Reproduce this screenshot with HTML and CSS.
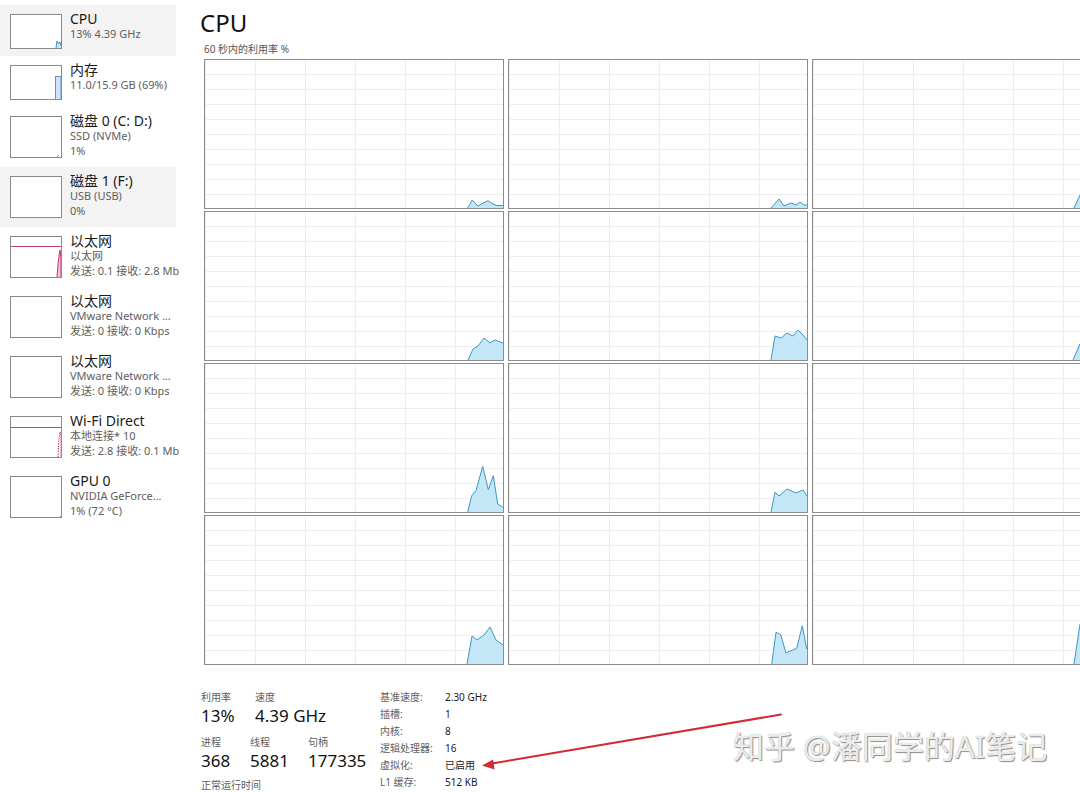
FILE: index.html
```html
<!DOCTYPE html>
<html lang="zh-CN">
<head>
<meta charset="utf-8">
<title>任务管理器 - CPU</title>
<link rel="stylesheet" href="styles.css">
</head>
<body>
<div class="app">
  <aside class="side">
    <div class="item two sel">
      <div class="thumb t2"><svg viewBox="0 0 50 33" preserveAspectRatio="none"><polygon class="cpu-f" points="45,33 46,26 47.5,29 49,27 50,31 50,33"/><polyline class="cpu-s" points="45,33 46,26 47.5,29 49,27 50,31"/></svg></div>
      <div class="txt"><div class="ttl">CPU</div><div class="sub">13% 4.39 GHz</div></div>
    </div>
    <div class="item two">
      <div class="thumb t2"><svg viewBox="0 0 50 33" preserveAspectRatio="none"><rect class="mem" x="44.5" y="10.5" width="5.5" height="23"/></svg></div>
      <div class="txt"><div class="ttl">内存</div><div class="sub">11.0/15.9 GB (69%)</div></div>
    </div>
    <div class="item three">
      <div class="thumb t3"><svg viewBox="0 0 50 40" preserveAspectRatio="none"><polyline class="dsk" points="46,40 48,38"/></svg></div>
      <div class="txt"><div class="ttl">磁盘 0 (C: D:)</div><div class="sub">SSD (NVMe)</div><div class="sub">1%</div></div>
    </div>
    <div class="item three sel">
      <div class="thumb t3"></div>
      <div class="txt"><div class="ttl">磁盘 1 (F:)</div><div class="sub">USB (USB)</div><div class="sub">0%</div></div>
    </div>
    <div class="item three">
      <div class="thumb t3"><svg viewBox="0 0 50 40" preserveAspectRatio="none"><line class="net-l" x1="0" y1="9.5" x2="50" y2="9.5"/><polygon class="net-f" points="46,40 47,27 48,19 49,13 50,21 50,40"/><polyline class="net-s" points="46,40 47,27 48,19 49,13 50,21 50,40"/></svg></div>
      <div class="txt"><div class="ttl">以太网</div><div class="sub">以太网</div><div class="sub">发送: 0.1 接收: 2.8 Mb</div></div>
    </div>
    <div class="item three">
      <div class="thumb t3"></div>
      <div class="txt"><div class="ttl">以太网</div><div class="sub">VMware Network ...</div><div class="sub">发送: 0 接收: 0 Kbps</div></div>
    </div>
    <div class="item three">
      <div class="thumb t3"></div>
      <div class="txt"><div class="ttl">以太网</div><div class="sub">VMware Network ...</div><div class="sub">发送: 0 接收: 0 Kbps</div></div>
    </div>
    <div class="item three">
      <div class="thumb t3"><svg viewBox="0 0 50 40" preserveAspectRatio="none"><line class="net-l" x1="0" y1="10.5" x2="50" y2="10.5"/><polyline class="net-d" points="47,40 47.5,30 48,22 49,15 50,18 50,40"/></svg></div>
      <div class="txt"><div class="ttl">Wi-Fi Direct</div><div class="sub">本地连接* 10</div><div class="sub">发送: 2.8 接收: 0.1 Mb</div></div>
    </div>
    <div class="item three">
      <div class="thumb t3"><svg viewBox="0 0 50 40" preserveAspectRatio="none"><polyline class="dsk" points="49,40 50,39"/></svg></div>
      <div class="txt"><div class="ttl">GPU 0</div><div class="sub">NVIDIA GeForce...</div><div class="sub">1% (72 °C)</div></div>
    </div>
  </aside>

  <main class="main">
    <h1 class="title">CPU</h1>
    <div class="caption">60 秒内的利用率 %</div>
    <div class="grid">
      <div class="cell"><svg viewBox="0 0 298 148" preserveAspectRatio="none"><polygon class="gf" points="262.7,148 267.3,140 272.7,146 283,140.7 288,144 292,145.5 298,145.5 298,148"/><polyline class="gs" points="262.7,148 267.3,140 272.7,146 283,140.7 288,144 292,145.5 298,145.5"/></svg></div>
      <div class="cell"><svg viewBox="0 0 298 148" preserveAspectRatio="none"><polygon class="gf" points="262,148 270,139 275,146 282,143 287,145 291,142 295,145 298,145 298,148"/><polyline class="gs" points="262,148 270,139 275,146 282,143 287,145 291,142 295,145 298,145"/></svg></div>
      <div class="cell"><svg viewBox="0 0 298 148" preserveAspectRatio="none"><polygon class="gf" points="261,148 267,135 270,133 280,140 298,144 298,148"/><polyline class="gs" points="261,148 267,135 270,133 280,140 298,144"/></svg></div>

      <div class="cell"><svg viewBox="0 0 298 148" preserveAspectRatio="none"><polygon class="gf" points="263,148 268,137 273,134 279,126 285,131 290,128 298,131 298,148"/><polyline class="gs" points="263,148 268,137 273,134 279,126 285,131 290,128 298,131"/></svg></div>
      <div class="cell"><svg viewBox="0 0 298 148" preserveAspectRatio="none"><polygon class="gf" points="262,148 266,124 272,126 278,121 284,124 289,118 294,123 298,128 298,148"/><polyline class="gs" points="262,148 266,124 272,126 278,121 284,124 289,118 294,123 298,128"/></svg></div>
      <div class="cell"><svg viewBox="0 0 298 148" preserveAspectRatio="none"><polygon class="gf" points="260,148 267,132 275,128 298,130 298,148"/><polyline class="gs" points="260,148 267,132 275,128 298,130"/></svg></div>

      <div class="cell"><svg viewBox="0 0 298 148" preserveAspectRatio="none"><polygon class="gf" points="262.7,148 266.7,131.7 271,126.7 277.7,102.3 283.3,125.7 288.3,111.7 292.7,140 298,143.3 298,148"/><polyline class="gs" points="262.7,148 266.7,131.7 271,126.7 277.7,102.3 283.3,125.7 288.3,111.7 292.7,140 298,143.3"/></svg></div>
      <div class="cell"><svg viewBox="0 0 298 148" preserveAspectRatio="none"><polygon class="gf" points="262,148 266,128 270,132 278,125 287,129 294,126 298,132 298,148"/><polyline class="gs" points="262,148 266,128 270,132 278,125 287,129 294,126 298,132"/></svg></div>
      <div class="cell"></div>

      <div class="cell"><svg viewBox="0 0 298 148" preserveAspectRatio="none"><polygon class="gf" points="262,148 267,120 272,124 279,119 285,111 291,124 298,129 298,148"/><polyline class="gs" points="262,148 267,120 272,124 279,119 285,111 291,124 298,129"/></svg></div>
      <div class="cell"><svg viewBox="0 0 298 148" preserveAspectRatio="none"><polygon class="gf" points="262.7,148 267,116.3 271.7,118.7 277,137 287.7,132.3 293.3,109.7 297.7,133 298,148"/><polyline class="gs" points="262.7,148 267,116.3 271.7,118.7 277,137 287.7,132.3 293.3,109.7 297.7,133"/></svg></div>
      <div class="cell"><svg viewBox="0 0 298 148" preserveAspectRatio="none"><polygon class="gf" points="261,148 267,108 275,100 298,120 298,148"/><polyline class="gs" points="261,148 267,108 275,100 298,120"/></svg></div>
    </div>

    <div class="stats">
      <div class="dyn">
        <div class="row">
          <div class="stat w54"><div class="lbl">利用率</div><div class="val">13%</div></div>
          <div class="stat"><div class="lbl">速度</div><div class="val">4.39 GHz</div></div>
        </div>
        <div class="row r2">
          <div class="stat w49"><div class="lbl">进程</div><div class="val">368</div></div>
          <div class="stat w58"><div class="lbl">线程</div><div class="val">5881</div></div>
          <div class="stat"><div class="lbl">句柄</div><div class="val">177335</div></div>
        </div>
        <div class="lbl uptime">正常运行时间</div>
      </div>
      <div class="spec">
        <div class="sk">基准速度:</div><div class="sv">2.30 GHz</div>
        <div class="sk">插槽:</div><div class="sv">1</div>
        <div class="sk">内核:</div><div class="sv">8</div>
        <div class="sk">逻辑处理器:</div><div class="sv">16</div>
        <div class="sk">虚拟化:</div><div class="sv">已启用</div>
        <div class="sk">L1 缓存:</div><div class="sv">512 KB</div>
      </div>
    </div>
  </main>

  <svg class="arrow" viewBox="0 0 1080 792" width="1080" height="792">
    <line x1="781" y1="714.5" x2="492" y2="763.5" stroke="#d42a36" stroke-width="2" stroke-linecap="round"/>
    <polygon points="482,765.5 494.6,769.4 493.1,759.6" fill="#d42a36"/>
  </svg>
  <div class="watermark">知乎 @潘同学的AI笔记</div>
</div>
</body>
</html>
```

FILE: styles.css
```css
html, body {
  margin: 0;
  padding: 0;
  background: #ffffff;
}
body {
  width: 1080px;
  height: 792px;
  overflow: hidden;
  font-family: "Noto Sans", "Noto Sans CJK SC", sans-serif;
  color: #1a1a1a;
}
.app {
  position: relative;
  display: flex;
  width: 1080px;
  height: 792px;
  overflow: hidden;
}

/* sidebar */
.side {
  flex: 0 0 176px;
  width: 176px;
  padding-top: 5px;
  display: flex;
  flex-direction: column;
}
.item {
  display: flex;
  align-items: flex-start;
  box-sizing: border-box;
  padding: 8px 0 0 10px;
  gap: 8px;
  white-space: nowrap;
}
.item.two { height: 51px; }
.item.three { height: 60px; }
.item.sel { background: #f3f3f3; }
.thumb {
  flex: 0 0 52px;
  width: 52px;
  box-sizing: border-box;
  border: 1px solid #8a8a8a;
  background: #ffffff;
  margin-top: 1px;
}
.thumb.t2 { height: 35px; }
.thumb.t3 { height: 42px; }
.thumb svg {
  display: block;
  width: 100%;
  height: 100%;
}
.cpu-f { fill: #c8e8f7; }
.cpu-s { fill: none; stroke: #3f96c7; stroke-width: 1; }
.mem { fill: #cfe2f7; stroke: #5b95d2; stroke-width: 1; }
.dsk { fill: none; stroke: #7a9a7a; stroke-width: 1; }
.net-l { stroke: #c23a72; stroke-width: 1; }
.net-f { fill: #f2c6d8; }
.net-s { fill: none; stroke: #c0336f; stroke-width: 1; }
.net-d { fill: none; stroke: #c0336f; stroke-width: 1; stroke-dasharray: 1.5 1; }
.txt {
  display: flex;
  flex-direction: column;
  margin-top: -2px;
}
.ttl {
  font-size: 14px;
  line-height: 15px;
  color: #1a1a1a;
}
.sub {
  font-size: 11px;
  line-height: 15px;
  color: #5e5e5e;
}

/* main */
.main {
  flex: 1 1 auto;
  padding-left: 24px;
  min-width: 0;
}
.title {
  margin: 9px 0 0 0;
  font-size: 24px;
  line-height: 28px;
  font-weight: 400;
  color: #111111;
}
.caption {
  margin: 6px 0 0 4px;
  font-size: 10px;
  line-height: 12px;
  color: #555555;
}
.grid {
  margin: 4px 0 0 4px;
  display: grid;
  grid-template-columns: repeat(3, 300px);
  grid-auto-rows: 150px;
  column-gap: 4px;
  row-gap: 2px;
  width: 908px;
}
.cell {
  box-sizing: border-box;
  border: 1px solid #8c8c8c;
  background-color: #ffffff;
  background-image:
    linear-gradient(to right, #ededed 1px, transparent 1px),
    linear-gradient(to bottom, transparent 14px, #ededed 14px);
  background-size: 50px 15px, 50px 15px;
}
.cell svg {
  display: block;
  width: 298px;
  height: 148px;
}
.gf { fill: #c3e7f6; }
.gs { fill: none; stroke: #3d98c4; stroke-width: 1; stroke-linejoin: round; }

/* stats */
.stats {
  display: flex;
  margin: 24px 0 0 1px;
}
.dyn {
  width: 179px;
  padding-top: 1px;
}
.row {
  display: flex;
}
.row.r2 { margin-top: 9px; }
.w54 { width: 54px; }
.w49 { width: 49px; }
.w58 { width: 58px; }
.lbl {
  font-size: 10px;
  line-height: 14px;
  color: #5e5e5e;
  white-space: nowrap;
}
.val {
  margin-top: 2px;
  font-size: 17px;
  line-height: 20px;
  color: #111111;
  white-space: nowrap;
}
.uptime { margin-top: 7px; }
.spec {
  display: grid;
  grid-template-columns: 65px auto;
  grid-auto-rows: 17px;
  font-size: 10px;
  line-height: 17px;
  white-space: nowrap;
}
.sk { color: #5e5e5e; }
.sv { color: #1a1a1a; }

/* overlays */
.arrow {
  position: absolute;
  left: 0;
  top: 0;
  pointer-events: none;
}
.watermark {
  position: absolute;
  left: 733px;
  top: 727px;
  font-size: 31px;
  line-height: 38px;
  color: #ececec;
  text-shadow: 1px 1px 1px #8c8c8c, 0 0 1px #b0b0b0;
  white-space: nowrap;
  pointer-events: none;
}
```
